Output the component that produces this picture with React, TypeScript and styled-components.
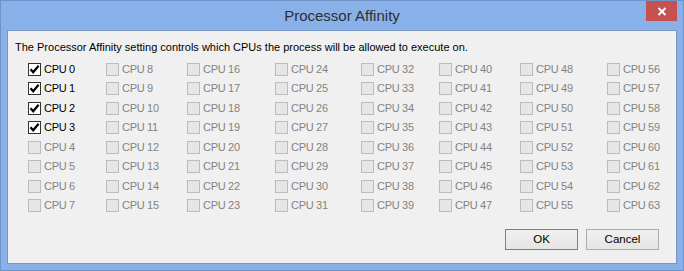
import React from "react";
import styled, { createGlobalStyle } from "styled-components";

const Global = createGlobalStyle`
  html, body { margin: 0; padding: 0; background: #89b1e9; }
  body { font-family: "Liberation Sans", Arial, sans-serif; }
`;

const Window = styled.div`
  box-sizing: border-box;
  width: 684px;
  height: 271px;
  background: #89b1e9;
  border: 1px solid #6f93c8;
  display: flex;
  flex-direction: column;
`;

const TitleBar = styled.div`
  height: 29px;
  display: grid;
  grid-template-columns: 1fr auto 1fr;
  align-items: start;
`;

const Title = styled.div`
  grid-column: 2;
  font-size: 15px;
  line-height: 20px;
  padding-top: 5px;
  color: #2e2e2e;
`;

const CloseButton = styled.div`
  grid-column: 3;
  justify-self: end;
  margin-right: 6px;
  width: 31px;
  height: 20px;
  background: #c75050;
  display: flex;
  align-items: center;
  justify-content: center;
`;

const Client = styled.div`
  box-sizing: border-box;
  margin: 0 6px 0 6px;
  height: 234px;
  background: #f0f0f0;
  border: 1px solid #7a96c0;
  display: flex;
  flex-direction: column;
  padding: 8px 17px 0 7px;
`;

const Description = styled.div`
  font-size: 11px;
  line-height: 16px;
  color: #000;
`;

const Grid = styled.div`
  margin-top: 8px;
  padding-left: 13px;
  display: grid;
  grid-auto-flow: column;
  grid-template-rows: repeat(4, 19px 20px);
  grid-template-columns: 78px 81px 88px 86px 78px 81px 87px auto;
`;

const Cell = styled.div`
  display: flex;
  align-items: center;
  height: 13px;
  gap: 3px;
`;

const Box = styled.div<{ $enabled: boolean }>`
  box-sizing: border-box;
  width: 13px;
  height: 13px;
  flex: none;
  border: 1px solid ${(p) => (p.$enabled ? "#333333" : "#bcbcbc")};
  background: ${(p) => (p.$enabled ? "#ffffff" : "#e6e6e6")};
  display: flex;
  align-items: center;
  justify-content: center;
`;

const Label = styled.span<{ $enabled: boolean }>`
  font-size: 11px;
  line-height: 13px;
  letter-spacing: -0.3px;
  color: ${(p) => (p.$enabled ? "#000000" : "#838383")};
  white-space: nowrap;
`;

const ButtonRow = styled.div`
  margin-top: 10px;
  display: flex;
  justify-content: flex-end;
  gap: 8px;
`;

const Button = styled.div<{ $default?: boolean }>`
  box-sizing: border-box;
  width: 73px;
  height: 21px;
  border: 1px solid ${(p) => (p.$default ? "#3c8fde" : "#acacac")};
  background: linear-gradient(#f0f0f0, #e5e5e5);
  font-size: 11.5px;
  line-height: 19px;
  text-align: center;
  color: #000;
`;

const Check = () => (
  <svg width="11" height="11" viewBox="0 0 11 11">
    <path d="M1.5 5.3 L4.2 8.3 L9.6 1.8" fill="none" stroke="#000" strokeWidth="2.2" />
  </svg>
);

const CloseX = () => (
  <svg width="10" height="9" viewBox="0 0 10 9">
    <path d="M1.5 1 L8.5 8 M8.5 1 L1.5 8" stroke="#fff" strokeWidth="2" />
  </svg>
);

export default function App() {
  const cpus = Array.from({ length: 64 }, (_, i) => i);
  return (
    <>
      <Global />
      <Window>
        <TitleBar>
          <Title>Processor Affinity</Title>
          <CloseButton>
            <CloseX />
          </CloseButton>
        </TitleBar>
        <Client>
          <Description>
            The Processor Affinity setting controls which CPUs the process will be allowed to execute on.
          </Description>
          <Grid>
            {cpus.map((i) => {
              const en = i < 4;
              return (
                <Cell key={i}>
                  <Box $enabled={en}>{en && <Check />}</Box>
                  <Label $enabled={en}>CPU {i}</Label>
                </Cell>
              );
            })}
          </Grid>
          <ButtonRow>
            <Button $default>OK</Button>
            <Button>Cancel</Button>
          </ButtonRow>
        </Client>
      </Window>
    </>
  );
}
